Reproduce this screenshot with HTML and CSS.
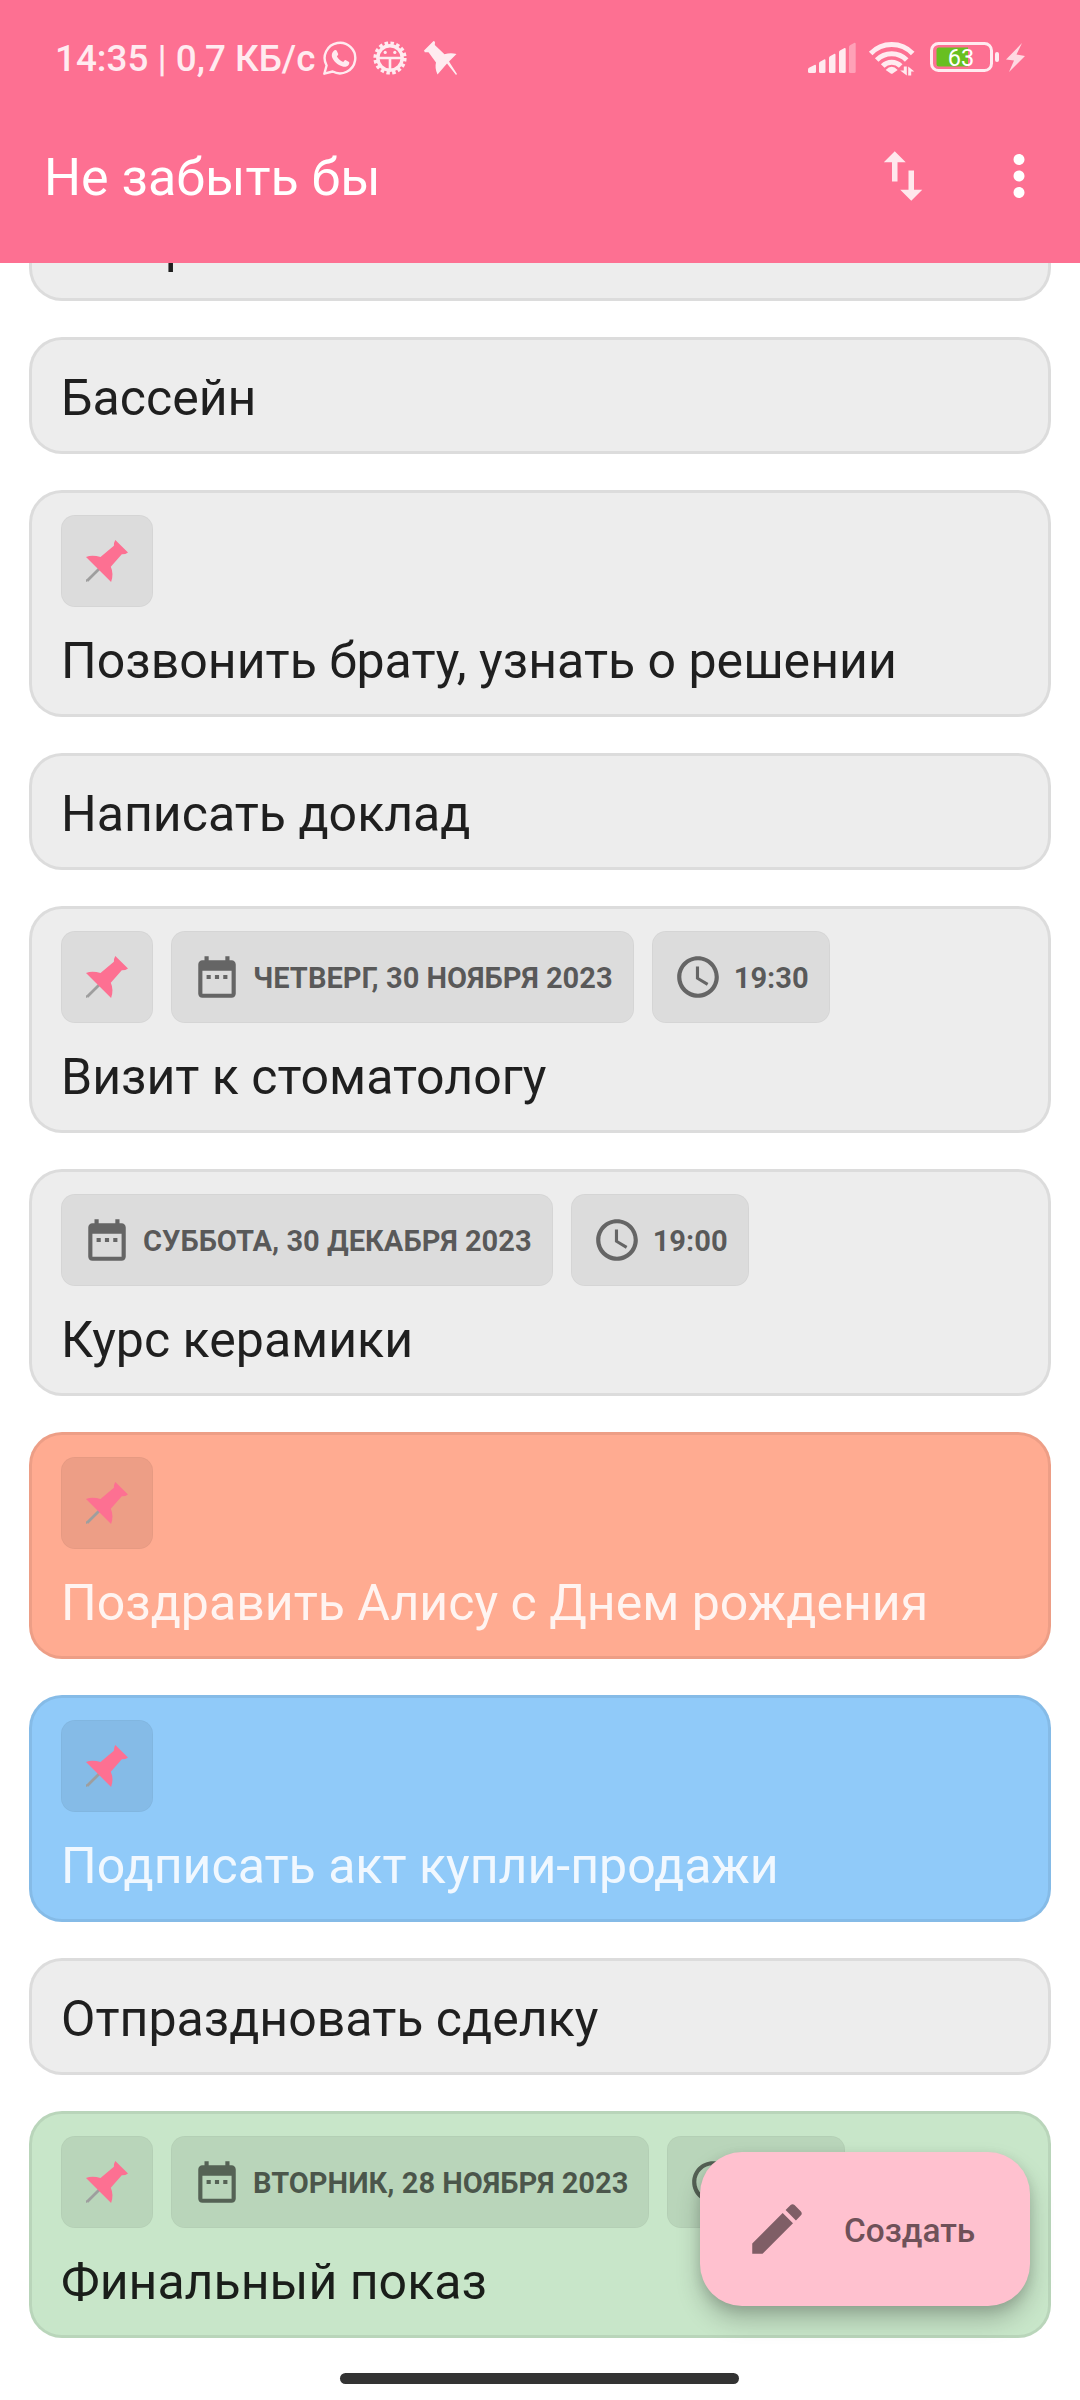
FILE: index.html
```html
<!DOCTYPE html>
<html lang="ru">
<head>
<meta charset="utf-8">
<title>Не забыть бы</title>
<link rel="stylesheet" href="styles.css">
</head>
<body>
<svg class="defs" aria-hidden="true">
  <symbol id="pin" viewBox="0 0 42 42">
    <path d="M13 29 1.2 40.8" stroke="#9e9e9e" stroke-width="2.8" fill="none"/>
    <path d="M0 42v-3l2 2z" fill="#9e9e9e"/>
    <path fill="#fd7092" d="M29.3 0 42 12.4Q39.5 14.4 35.8 14.3L24.8 26.8Q28 34 25.1 42L0 17Q6 14.300 14.500 17L27.900 5.800Q27.700 2.600 29.300 0z"/>
  </symbol>
  <symbol id="date" viewBox="0 0 24 24">
    <path d="M9 11H7v2h2v-2zm4 0h-2v2h2v-2zm4 0h-2v2h2v-2zm2-7h-1V2h-2v2H8V2H6v2H5c-1.110 0-1.990.9-1.990 2L3 20c0 1.100.890 2 2 2h14c1.100 0 2-.9 2-2V6c0-1.100-.9-2-2-2zm0 16H5V9h14v11z"/>
  </symbol>
  <symbol id="clock" viewBox="0 0 24 24">
    <path d="M11.990 2C6.470 2 2 6.480 2 12s4.470 10 9.990 10C17.520 22 22 17.520 22 12S17.520 2 11.990 2zM12 20c-4.420 0-8-3.580-8-8s3.580-8 8-8 8 3.580 8 8-3.580 8-8 8z"/>
    <path d="M12.500 7H11v6l5.250 3.150.75-1.230-4.500-2.670z"/>
  </symbol>
</svg>

<div class="screen">
  <header class="header">
    <div class="status">
      <span class="status-text">14:35 | 0,7 КБ/с</span>
      <svg class="s-ico" width="34" height="34" viewBox="0 0 34 34">
        <path d="M1.300 32.700 3.600 24.500A15.300 15.300 0 1 1 9.700 30.500z" fill="none" stroke="currentColor" stroke-width="2.400" stroke-linejoin="round"/>
        <path fill="currentColor" d="M11.500 9.300c.7-.6 1.700-.5 2.100.3l1.600 3.500c.3.700-1 1.900-1.300 2.500 1.500 2.600 3.400 4.400 6.300 5.500.7-.5 1.500-2.200 2.300-2l3.500 1.800c.5.300.3 1.800-.3 2.800-1.300 1.900-3.800 2.400-6 1.700-5.200-1.600-9.200-5.300-10.700-9.500-.8-2.500.6-5.300 2.500-6.600z"/>
      </svg>
      <svg class="s-ico bug" width="34" height="34" viewBox="-17 -17 34 34">
        <circle r="14.600" fill="none" stroke="currentColor" stroke-width="4" stroke-dasharray="3.400 2.334"/>
        <circle r="12.200" fill="none" stroke="currentColor" stroke-width="3.400"/>
        <path d="M-11.500 0H11.500M0 0V12" stroke="currentColor" stroke-width="2.600"/>
        <circle cx="-4.800" cy="-5.600" r="1.600" fill="currentColor"/><circle cx="4.800" cy="-5.600" r="1.600" fill="currentColor"/>
      </svg>
      <svg class="s-ico spin" width="33" height="34" viewBox="0 0 33 34">
        <path fill="currentColor" d="M9.500 0 11 .8 10.800 4 20.500 13.200Q26.500 11.500 32.500 13L25 20.500 33 33 32 34 23 22.500 13.500 33.500Q10.500 27 12 21.500L4.500 11.200.8 11.300 0 9.500z"/>
      </svg>
      <svg class="s-right" width="220" height="40" viewBox="806 38 220 40">
        <g fill="currentColor">
          <path d="M808 71.500V69.500Q808 68.500 809 67.800L815 64.800Q816 64.600 816 66V71.500Q816 73 814.500 73H809.500Q808 73 808 71.500z"/>
          <path d="M819 71.500V63.500Q819 62.500 820 61.800L824.500 59.300Q825.500 59.200 825.500 60.500V71.500Q825.500 73 824 73H820.500Q819 73 819 71.500z"/>
          <path d="M829 71.500V58Q829 57 830 56.300L834.500 53.800Q835.500 53.600 835.500 55V71.500Q835.500 73 834 73H830.500Q829 73 829 71.500z"/>
          <path d="M839 71.500V52.300Q839 51.300 840 50.600L844.500 48Q845.700 47.800 845.700 49V71.500Q845.700 73 844.200 73H840.500Q839 73 839 71.500z"/>
          <path opacity=".4" d="M849 71.500V47Q849 46 850 45.300L854.500 42.700Q855.700 42.500 855.700 44V71.500Q855.700 73 854.200 73H850.500Q849 73 849 71.500z"/>
          <path d="M885.700 70Q891.700 63.500 897.700 70L893 73.300Q891.700 74.300 890.400 73.300z"/>
          <path d="M903.800 66.500h3V75.500L900.200 70.500H903.800zM908.200 75.500V66.500L914.300 71.500H911.200V75.500z"/>
          <rect x="995" y="52" width="4" height="10" rx="2"/>
          <path opacity=".85" d="M1022 43 1006 59.500 1014 60.500 1009 72 1025 56 1016.500 54.500z"/>
        </g>
        <g fill="none" stroke="currentColor" stroke-width="5">
          <path d="M870.700 53.500A29 29 0 0 1 912.700 53.500"/>
          <path d="M876.700 60A21 21 0 0 1 906.700 60"/>
          <path d="M882.700 66A12.500 12.500 0 0 1 900.700 66"/>
          <rect x="931.500" y="43.500" width="60" height="27" rx="7" stroke-width="3"/>
        </g>
        <path d="M939 47.500H968V66.500H939Q936.500 66.500 936.500 64V50Q936.500 47.500 939 47.500z" fill="#68bf20"/>
        <text class="batt" x="961" y="65.800" text-anchor="middle">63</text>
      </svg>
    </div>
    <div class="toolbar">
      <h1 class="title">Не забыть бы</h1>
      <svg class="sort" width="66" height="66" viewBox="0 0 24 24"><path fill="currentColor" d="M9 3 5 6.990h3V14h2V6.990h3L9 3zm7 14.010V10h-2v7.010h-3L15 21l4-3.990h-3z"/></svg>
      <svg class="more" width="66" height="66" viewBox="0 0 24 24"><path fill="currentColor" d="M12 8c1.100 0 2-.9 2-2s-.9-2-2-2-2 .9-2 2 .9 2 2 2zm0 2c-1.100 0-2 .9-2 2s.9 2 2 2 2-.9 2-2-.9-2-2-2zm0 6c-1.100 0-2 .9-2 2s.9 2 2 2 2-.9 2-2-.9-2-2-2z"/></svg>
    </div>
  </header>

  <main class="list">
    <article class="card scrolled"><p class="text">р</p></article>
    <article class="card"><p class="text">Бассейн</p></article>
    <article class="card tagged">
      <div class="chips"><span class="chip pin"><svg><use href="#pin"/></svg></span></div>
      <p class="text">Позвонить брату, узнать о решении</p>
    </article>
    <article class="card"><p class="text">Написать доклад</p></article>
    <article class="card tagged">
      <div class="chips">
        <span class="chip pin"><svg><use href="#pin"/></svg></span>
        <span class="chip"><svg><use href="#date"/></svg><span class="label">ЧЕТВЕРГ, 30 НОЯБРЯ 2023</span></span>
        <span class="chip"><svg><use href="#clock"/></svg><span class="label">19:30</span></span>
      </div>
      <p class="text">Визит к стоматологу</p>
    </article>
    <article class="card tagged">
      <div class="chips">
        <span class="chip"><svg><use href="#date"/></svg><span class="label">СУББОТА, 30 ДЕКАБРЯ 2023</span></span>
        <span class="chip"><svg><use href="#clock"/></svg><span class="label">19:00</span></span>
      </div>
      <p class="text">Курс керамики</p>
    </article>
    <article class="card tagged orange">
      <div class="chips"><span class="chip pin"><svg><use href="#pin"/></svg></span></div>
      <p class="text">Поздравить Алису с Днем рождения</p>
    </article>
    <article class="card tagged blue">
      <div class="chips"><span class="chip pin"><svg><use href="#pin"/></svg></span></div>
      <p class="text">Подписать акт купли-продажи</p>
    </article>
    <article class="card"><p class="text">Отпраздновать сделку</p></article>
    <article class="card tagged green">
      <div class="chips">
        <span class="chip pin"><svg><use href="#pin"/></svg></span>
        <span class="chip"><svg><use href="#date"/></svg><span class="label">ВТОРНИК, 28 НОЯБРЯ 2023</span></span>
        <span class="chip"><svg><use href="#clock"/></svg><span class="label">19:00</span></span>
      </div>
      <p class="text">Финальный показ</p>
    </article>
  </main>

  <button class="fab">
    <svg width="66" height="66" viewBox="0 0 24 24"><path fill="currentColor" d="M3 17.250V21h3.750L17.810 9.940l-3.750-3.750L3 17.250zM20.710 7.040c.390-.390.390-1.020 0-1.410l-2.340-2.340c-.390-.390-1.020-.390-1.410 0l-1.830 1.830 3.750 3.750 1.830-1.830z"/></svg>
    <span>Создать</span>
  </button>
  <div class="home-bar"></div>
</div>
</body>
</html>
```
FILE: styles.css
```css
* { box-sizing: border-box; margin: 0; padding: 0; }
body { font-family: Roboto, "Noto Sans", sans-serif; background: #fff; }
.defs { display: none; }
.screen {
  position: relative;
  width: 1080px;
  height: 2400px;
  overflow: hidden;
  display: flex;
  flex-direction: column;
}

.header { height: 263px; background: #fd7092; color: #fff; flex: none; }
.status {
  height: 88px;
  padding: 27px 54px 0 55px;
  display: flex;
  align-items: center;
  color: #ffebf0;
}
.status-text {
  width: 268px;
  font-size: 36.8px;
  font-weight: 500;
  line-height: 60px;
  white-space: nowrap;
  margin-top: 3px;
}
.s-ico { flex: none; }
.bug { margin-left: 16px; }
.spin { margin-left: 17px; }
.s-right { margin: 1px 0 0 auto; flex: none; }
.batt { font-size: 23.5px; fill: #fff; }

.toolbar {
  height: 175px;
  padding: 0 28px 0 44px;
  display: flex;
  align-items: center;
}
.title { font-size: 52px; font-weight: 400; line-height: 64px; margin-top: 5px; flex: 1; }
.sort { margin-right: 50px; color: #ffe8ed; }

.list {
  flex: 1;
  overflow: hidden;
  padding: 0 29px;
  display: flex;
  flex-direction: column;
  gap: 36px;
}
.card {
  flex: none;
  background: #ededed;
  color: rgba(0, 0, 0, .87);
  border: 3px solid rgba(0, 0, 0, .07);
  border-radius: 33px;
  padding: 28px 29px 23px;
}
.card.tagged { padding-top: 22px; }
.card.scrolled { margin-top: -79px; padding-left: 133px; }
.text { font-size: 50.06px; line-height: 60px; white-space: nowrap; }
.chips { display: flex; gap: 18px; margin-bottom: 24px; }
.chip {
  height: 92px;
  padding: 0 20px;
  display: flex;
  align-items: center;
  gap: 11px;
  border: 1px solid rgba(0, 0, 0, .03);
  border-radius: 14px;
  background: rgba(0, 0, 0, .07);
  color: rgba(0, 0, 0, .6);
  font-size: 29.1px;
  font-weight: 700;
  white-space: nowrap;
}
.chip svg { width: 50px; height: 50px; fill: rgba(0, 0, 0, .54); }
.label { padding-top: 2px; }
.chip.pin { padding: 0 24px; }
.chip.pin svg { width: 42px; height: 42px; }
.orange { background: #ffab91; color: rgba(255, 255, 255, .87); }
.blue { background: #90caf9; color: rgba(255, 255, 255, .87); }
.green { background: #c8e6c9; }

.fab {
  position: absolute;
  left: 700px;
  top: 2152px;
  width: 330px;
  height: 154px;
  padding: 0 0 0 44px;
  border: 0;
  border-radius: 42px;
  display: flex;
  align-items: center;
  gap: 34px;
  background: #ffc1cf;
  color: #7f5e66;
  font: 500 33.4px/40px Roboto, sans-serif;
  box-shadow: 0 14px 24px rgba(0, 0, 0, .22), 0 4px 12px rgba(0, 0, 0, .12);
}
.fab span { color: #6f5159; padding-top: 3px; }
.home-bar {
  position: absolute;
  left: 340px;
  bottom: 16px;
  width: 399px;
  height: 11px;
  border-radius: 6px;
  background: #333;
}
```
